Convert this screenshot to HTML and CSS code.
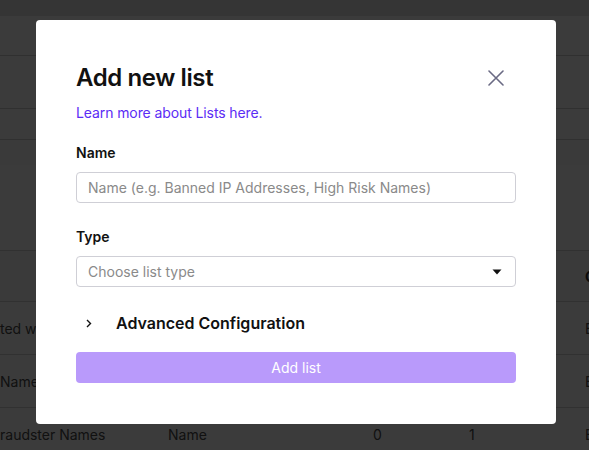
FILE: index.html
```html
<!DOCTYPE html>
<html lang="en">
<head>
<meta charset="utf-8">
<title>Add new list</title>
<link rel="stylesheet" href="styles.css">
</head>
<body>
<div class="page">
  <div class="topbar"></div>
  <div class="titlebar"></div>
  <div class="toolbar"></div>
  <div class="tabs"></div>
  <div class="filters"></div>
  <div class="spacer"></div>
  <div class="table">
    <div class="row head">
      <span class="c1"></span><span class="c2"></span><span class="c3"></span><span class="c4"></span><span class="c5">C</span>
    </div>
    <div class="row">
      <span class="c1">ted with</span><span class="c2"></span><span class="c3"></span><span class="c4"></span><span class="c5">E</span>
    </div>
    <div class="row">
      <span class="c1">Names</span><span class="c2"></span><span class="c3"></span><span class="c4"></span><span class="c5">E</span>
    </div>
    <div class="row">
      <span class="c1">raudster Names</span><span class="c2">Name</span><span class="c3">0</span><span class="c4">1</span><span class="c5">E</span>
    </div>
  </div>
</div>

<div class="overlay">
  <div class="modal">
    <div class="modal-head">
      <h1 class="title">Add new list</h1>
      <button class="close" aria-label="Close">
        <svg width="16" height="16" viewBox="0 0 16 16"><path d="M1 1 L15 15 M15 1 L1 15" stroke="#6a6a84" stroke-width="1.6" fill="none" stroke-linecap="round"/></svg>
      </button>
    </div>
    <a class="learn" href="#">Learn more about Lists here.</a>

    <label class="label">Name</label>
    <div class="field"><span class="placeholder">Name (e.g. Banned IP Addresses, High Risk Names)</span></div>

    <label class="label">Type</label>
    <div class="field select">
      <span class="placeholder">Choose list type</span>
      <svg class="caret" width="10" height="6" viewBox="0 0 10 6"><path d="M0.5 0.5 L9.5 0.5 L5 5.5 Z" fill="#111"/></svg>
    </div>

    <div class="advanced">
      <svg class="chev" width="6" height="9" viewBox="0 0 6 9"><path d="M1 1 L4.5 4.5 L1 8" stroke="#111" stroke-width="1.4" fill="none"/></svg>
      <span>Advanced Configuration</span>
    </div>

    <button class="submit">Add list</button>
  </div>
</div>
</body>
</html>
```

FILE: styles.css
```css
* { box-sizing: border-box; }
html, body { margin: 0; padding: 0; }
body {
  font-family: Inter, "Noto Sans", sans-serif;
  background: #ffffff;
  width: 589px;
  height: 450px;
  overflow: hidden;
}
.page {
  width: 589px;
  color: #4a4a4a;
  font-size: 14px;
}
.topbar { height: 16px; background: #e4e4e4; }
.titlebar { height: 40px; border-bottom: 1px solid #cfcfcf; }
.toolbar { height: 53px; border-bottom: 1px solid #cfcfcf; }
.tabs { height: 31px; border-bottom: 1px solid #cfcfcf; }
.filters { height: 25px; background: #fafafa; }
.spacer { height: 85px; }
.table { display: flex; flex-direction: column; }
.row {
  display: flex;
  align-items: center;
  height: 53px;
  border-top: 1px solid #d4d4d4;
  white-space: nowrap;
}
.row.head { height: 51px; background: #fafafa; font-weight: 700; color: #333; }
.c1 { width: 168px; flex: none; }
.c2 { width: 205px; flex: none; }
.c3 { width: 96px; flex: none; }
.c4 { width: 116px; flex: none; }
.c5 { flex: none; }

.overlay {
  position: fixed;
  inset: 0;
  background: rgba(0, 0, 0, 0.77);
  display: flex;
  justify-content: center;
  align-items: flex-start;
  padding: 20px 0 0 3px;
}
.modal {
  width: 520px;
  background: #fff;
  border-radius: 4px;
  padding: 42px 40px 41px 40px;
  display: flex;
  flex-direction: column;
  color: #111;
}
.modal-head {
  display: flex;
  justify-content: space-between;
  align-items: center;
  height: 32px;
}
.title {
  margin: 0;
  font-size: 24px;
  font-weight: 600;
  line-height: 32px;
  letter-spacing: -0.4px;
  color: #111;
}
.close {
  border: 0;
  background: none;
  padding: 0;
  width: 16px;
  height: 16px;
  margin-right: 12px;
  display: flex;
}
.learn {
  margin-top: 9px;
  font-size: 14px;
  line-height: 20px;
  letter-spacing: -0.1px;
  color: #5b2cf5;
  text-decoration: none;
}
.label {
  margin-top: 20px;
  font-size: 14px;
  font-weight: 600;
  line-height: 20px;
  color: #111;
}
.field {
  margin-top: 9px;
  height: 31px;
  border: 1px solid #cfcfd6;
  border-radius: 4px;
  padding: 0 11px;
  display: flex;
  align-items: center;
  font-size: 14px;
}
.field + .label { margin-top: 24px; }
.placeholder { color: #8a8a8a; }
.select { justify-content: space-between; padding-right: 13px; }
.caret { display: block; }
.advanced {
  margin-top: 25px;
  height: 22px;
  display: flex;
  align-items: center;
  font-size: 16px;
  font-weight: 600;
  color: #111;
}
.chev { margin-left: 10px; margin-right: 24px; }
.submit {
  margin-top: 18px;
  height: 31px;
  border: 0;
  border-radius: 4px;
  background: #b99afb;
  color: #fff;
  font-family: inherit;
  font-size: 14px;
}
```
